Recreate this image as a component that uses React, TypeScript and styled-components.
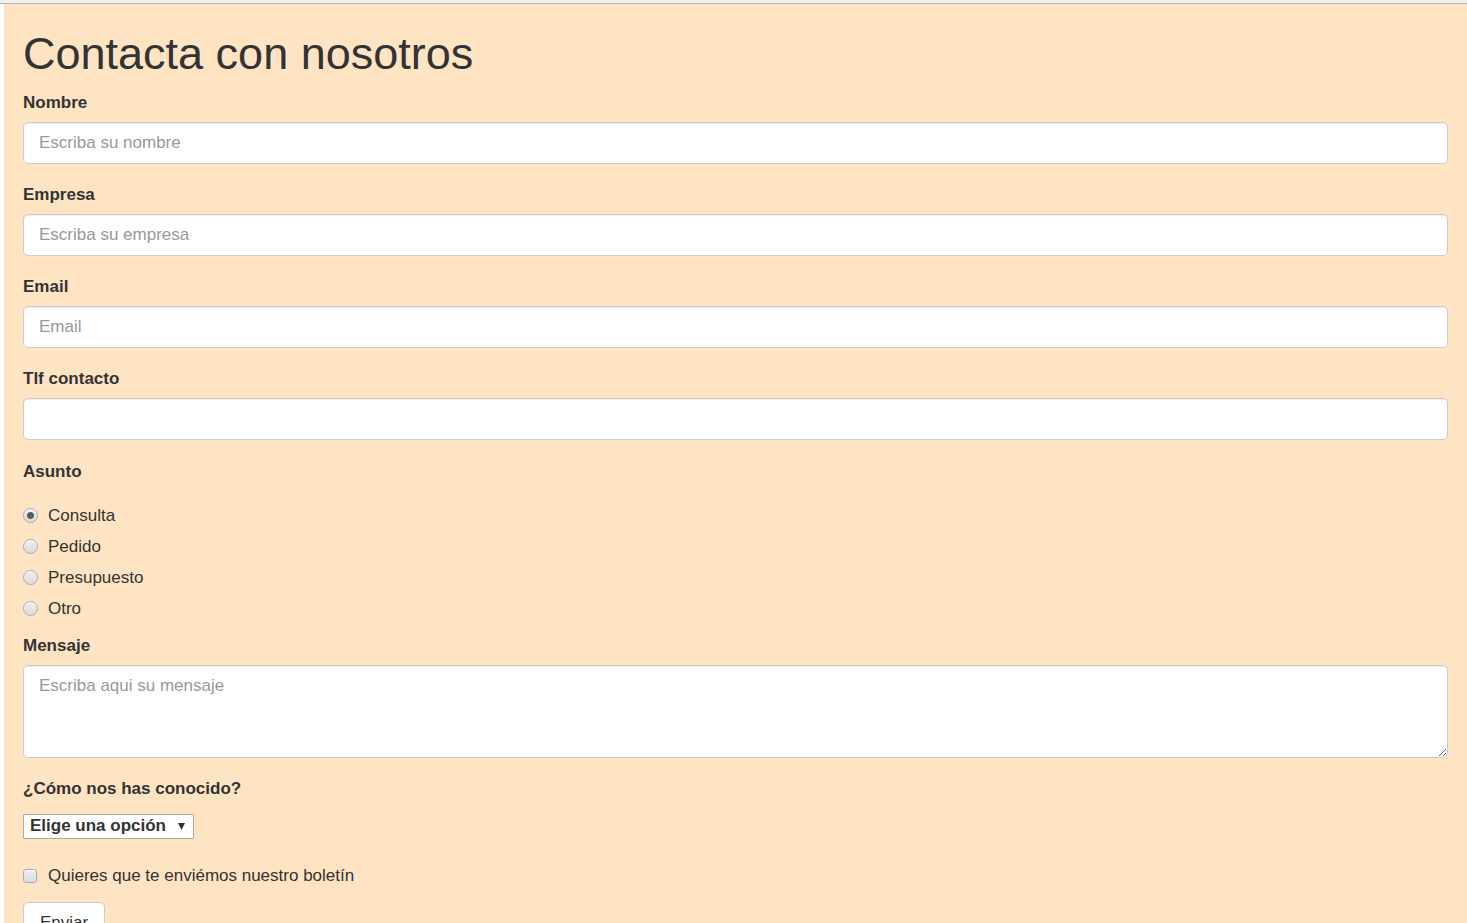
import React from "react";
import styled, { createGlobalStyle } from "styled-components";

const GlobalStyle = createGlobalStyle`
  *, *::before, *::after { box-sizing: border-box; }
  html { scrollbar-width: none; }
  body {
    margin: 0;
    background: #fff;
    color: #333;
    font-family: "Liberation Sans", Arial, Helvetica, sans-serif;
    font-size: 17px;
    line-height: 25px;
  }
  input, textarea, select, button { font: inherit; color: inherit; margin: 0; }
`;

const TopBar = styled.div`
  height: 4px;
  background: #f1f1f1;
  border-bottom: 1px solid #b2b2b2;
`;

const Panel = styled.main`
  margin-left: 4px;
  padding: 25px 19px;
  background: #ffe4c4;
`;

const Title = styled.h1`
  margin: 0 0 12px;
  font-size: 45px;
  font-weight: 500;
  line-height: 50px;
`;

const Group = styled.div`
  margin-bottom: 19px;
`;

const Label = styled.label<{ $gap?: number }>`
  display: block;
  width: fit-content;
  margin-bottom: ${({ $gap = 8 }) => $gap}px;
  font-weight: 700;
  line-height: 23px;
`;

const TextInput = styled.input`
  display: block;
  width: 100%;
  height: 42px;
  padding: 7px 15px;
  border: 1px solid #ccc;
  border-radius: 5px;
  background: #fff;
  box-shadow: inset 0 1px 1px rgba(0, 0, 0, 0.075);
  outline: none;
  &::placeholder { color: #999; opacity: 1; }
  &:focus { border-color: #66afe9; }
`;

const TextArea = styled(TextInput).attrs({ as: "textarea" })`
  height: 93px;
  resize: vertical;
`;

const Options = styled.fieldset`
  display: flex;
  flex-direction: column;
  gap: 6px;
  margin: 0 0 13px;
  padding: 0;
  border: 0;
`;

const Legend = styled.legend`
  margin-bottom: 19px;
  padding: 0;
  font-weight: 700;
`;

const Choice = styled.label`
  display: flex;
  align-items: center;
  gap: 10px;
  width: fit-content;
  cursor: pointer;
`;

const Radio = styled.input.attrs({ type: "radio" })`
  appearance: none;
  width: 15px;
  height: 15px;
  border: 1px solid #aaa;
  border-radius: 50%;
  background: linear-gradient(#eee, #dcdcdc);
  box-shadow: inset 0 1px 1px #fff;
  &:checked {
    background: radial-gradient(circle, #5c5c5c 3px, transparent 4px),
      linear-gradient(#eee, #dcdcdc);
  }
`;

const Checkbox = styled.input.attrs({ type: "checkbox" })`
  appearance: none;
  width: 14px;
  height: 14px;
  margin-right: 1px;
  border: 1px solid #aaa;
  border-radius: 3px;
  background: linear-gradient(#eee, #dcdcdc);
  box-shadow: inset 0 1px 1px #fff;
  &:checked { background: #5c5c5c; }
`;

const SelectBox = styled.div`
  position: relative;
  width: fit-content;
  margin-bottom: 24px;
`;

const Select = styled.select`
  appearance: none;
  display: block;
  width: 171px;
  height: 25px;
  padding: 0 20px 2px 6px;
  border: 1px solid #a9a9a9;
  border-radius: 1px;
  background: #fff;
  font-weight: 700;
  line-height: 22px;
`;

const Arrow = styled.svg`
  position: absolute;
  top: 9px;
  right: 9px;
  pointer-events: none;
`;

const Submit = styled.button`
  display: block;
  height: 42px;
  margin-top: 14px;
  padding: 5px 16px 7px;
  border: 1px solid #ccc;
  border-radius: 5px;
  background: #fff;
  cursor: pointer;
`;

const fields = [
  { id: "nombre", label: "Nombre", type: "text", placeholder: "Escriba su nombre" },
  { id: "empresa", label: "Empresa", type: "text", placeholder: "Escriba su empresa" },
  { id: "email", label: "Email", type: "email", placeholder: "Email" },
  { id: "telefono", label: "Tlf contacto", type: "tel", placeholder: "" },
];

const subjects = ["Consulta", "Pedido", "Presupuesto", "Otro"];

export default function App() {
  return (
    <>
      <GlobalStyle />
      <TopBar />
      <Panel>
        <Title>Contacta con nosotros</Title>
        <form onSubmit={(event) => event.preventDefault()}>
          {fields.map(({ id, label, type, placeholder }) => (
            <Group key={id}>
              <Label htmlFor={id}>{label}</Label>
              <TextInput id={id} name={id} type={type} placeholder={placeholder} />
            </Group>
          ))}
          <Options>
            <Legend>Asunto</Legend>
            {subjects.map((subject, index) => (
              <Choice key={subject}>
                <Radio name="asunto" value={subject} defaultChecked={index === 0} />
                {subject}
              </Choice>
            ))}
          </Options>
          <Group>
            <Label htmlFor="mensaje">Mensaje</Label>
            <TextArea id="mensaje" name="mensaje" placeholder="Escriba aqui su mensaje" />
          </Group>
          <Label htmlFor="origen" $gap={14}>¿Cómo nos has conocido?</Label>
          <SelectBox>
            <Select id="origen" name="origen">
              <option>Elige una opción</option>
            </Select>
            <Arrow width="7" height="7" viewBox="0 0 7 7" aria-hidden="true">
              <path d="M0 0h7L3.5 7z" fill="#333" />
            </Arrow>
          </SelectBox>
          <Choice>
            <Checkbox name="boletin" />
            Quieres que te enviémos nuestro boletín
          </Choice>
          <Submit type="submit">Enviar</Submit>
        </form>
      </Panel>
    </>
  );
}
